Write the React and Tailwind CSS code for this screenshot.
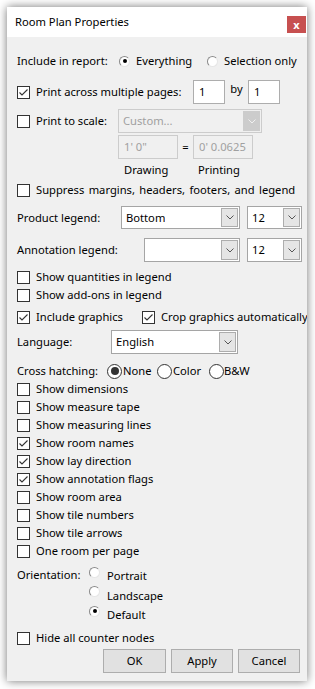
import React from 'react';

const Check = ({ checked }) => (
  <div className="w-[13px] h-[13px] shrink-0 border border-[#333333] bg-white flex items-center justify-center">
    {checked && (
      <svg width="11" height="11" viewBox="0 0 11 11">
        <path d="M1.5 5.5 L4 8 L9.5 2.5" fill="none" stroke="#333333" strokeWidth="1.1" />
      </svg>
    )}
  </div>
);

const CheckRow = ({ checked, label, className = '' }) => (
  <div className={`h-[18px] flex items-center gap-[6px] ${className}`}>
    <Check checked={checked} />
    <span className="whitespace-nowrap">{label}</span>
  </div>
);

// old style 3D radio
const ClassicRadio = ({ checked }) => (
  <div className="w-[11px] h-[11px] shrink-0 rounded-full bg-white border border-t-[#8a8a8a] border-l-[#8a8a8a] border-r-[#e6e6e6] border-b-[#e6e6e6] flex items-center justify-center">
    {checked && <div className="w-[4px] h-[4px] rounded-full bg-black" />}
  </div>
);

const ModernRadio = ({ checked }) => (
  <div className="w-[15px] h-[15px] shrink-0 rounded-full bg-white border border-[#333333] flex items-center justify-center">
    {checked && <div className="w-[8px] h-[8px] rounded-full bg-[#333333]" />}
  </div>
);

const Chevron = ({ color = '#555555' }) => (
  <svg width="8" height="5" viewBox="0 0 8 5">
    <path d="M0.5 0.5 L4 4 L7.5 0.5" fill="none" stroke={color} strokeWidth="1" />
  </svg>
);

const Select = ({ value, width, disabled }) => (
  <div
    className={`${width} h-full shrink-0 flex items-center justify-between border p-px ${
      disabled ? 'border-[#cccccc] bg-[#f0f0f0] text-[#a0a0a0]' : 'border-[#a5a5a5] bg-white'
    }`}
  >
    <span className="pl-[3px] whitespace-nowrap overflow-hidden">{value}</span>
    <div
      className={`w-[17px] h-full shrink-0 flex items-center justify-center border ${
        disabled ? 'bg-[#cccccc] border-[#cccccc]' : 'bg-[#e5e5e5] border-[#adadad]'
      }`}
    >
      <Chevron color={disabled ? '#f0f0f0' : '#555555'} />
    </div>
  </div>
);

const Input = ({ value, width, disabled }) => (
  <div
    className={`${width} h-full shrink-0 flex items-center border pl-[5px] overflow-hidden whitespace-nowrap ${
      disabled ? 'border-[#cccccc] bg-[#f0f0f0] text-[#a0a0a0]' : 'border-[#adadad] bg-white'
    }`}
  >
    {value}
  </div>
);

const Button = ({ label, width }) => (
  <div className={`${width} h-full flex items-center justify-center bg-[#e1e1e1] border border-[#adadad]`}>
    {label}
  </div>
);

const listItems = [
  ['Show dimensions', false],
  ['Show measure tape', false],
  ['Show measuring lines', false],
  ['Show room names', true],
  ['Show lay direction', true],
  ['Show annotation flags', true],
  ['Show room area', false],
  ['Show tile numbers', false],
  ['Show tile arrows', false],
  ['One room per page', false],
];

export default function App() {
  return (
    <div className="min-h-screen bg-white pt-[7px] pl-[7px] font-['Noto_Sans',sans-serif] text-[11.2px] leading-[16px] text-black">
      <div className="w-[300px] h-[674px] bg-[#f0f0f0] shadow-[0_0_9px_rgba(0,0,0,0.55)] flex flex-col overflow-hidden">
        {/* title bar */}
        <div className="h-[30px] shrink-0 bg-white flex items-start justify-between">
          <span className="pl-[8px] pt-[7px]">Room Plan Properties</span>
          <div className="mt-[9px] mr-px w-[19px] h-[17px] bg-[#c75050] text-white flex items-center justify-center text-[11px] font-bold leading-none">
            x
          </div>
        </div>

        <div className="pl-[10px] flex flex-col">
          <div className="mt-[14px] h-[20px] flex items-center">
            <span className="w-[102px] shrink-0">Include in report:</span>
            <div className="w-[88px] flex items-center gap-[6px]">
              <ClassicRadio checked />
              <span>Everything</span>
            </div>
            <div className="flex items-center gap-[6px] whitespace-nowrap">
              <ClassicRadio />
              <span>Selection only</span>
            </div>
          </div>

          <div className="mt-[9px] h-[24px] flex items-center">
            <div className="w-[176px] shrink-0 flex items-center gap-[6px]">
              <Check checked />
              <span className="whitespace-nowrap">Print across multiple pages:</span>
            </div>
            <Input value="1" width="w-[32px]" />
            <span className="w-[23px] text-center self-start pt-px">by</span>
            <Input value="1" width="w-[32px]" />
          </div>

          <div className="mt-[5px] h-[24px] flex items-center">
            <div className="w-[101px] shrink-0 flex items-center gap-[6px]">
              <Check />
              <span className="whitespace-nowrap">Print to scale:</span>
            </div>
            <Select value="Custom..." width="w-[144px]" disabled />
          </div>

          <div className="mt-[2px] h-[24px] flex items-center pl-[101px]">
            <Input value={'1\' 0"'} width="w-[60px]" disabled />
            <span className="w-[15px] text-center">=</span>
            <Input value="0' 0.0625" width="w-[60px]" disabled />
          </div>

          <div className="mt-[2px] h-[18px] flex items-center pl-[107px]">
            <span className="w-[74px]">Drawing</span>
            <span>Printing</span>
          </div>

          <CheckRow className="mt-[2px] [word-spacing:1.5px]" label="Suppress margins, headers, footers, and legend" />

          <div className="mt-[7px] h-[23px] flex items-center">
            <span className="w-[104px] shrink-0">Product legend:</span>
            <Select value="Bottom" width="w-[119px]" />
            <div className="w-[7px]" />
            <Select value="12" width="w-[55px]" />
          </div>

          <div className="mt-[9px] h-[24px] flex items-center">
            <span className="w-[127px] shrink-0">Annotation legend:</span>
            <Select value="" width="w-[96px]" />
            <div className="w-[7px]" />
            <Select value="12" width="w-[55px]" />
          </div>

          <CheckRow className="mt-[6px]" label="Show quantities in legend" />
          <CheckRow label="Show add-ons in legend" />

          <div className="mt-[4px] h-[18px] flex items-center">
            <div className="w-[125px] shrink-0 flex items-center gap-[6px]">
              <Check checked />
              <span className="whitespace-nowrap">Include graphics</span>
            </div>
            <div className="flex items-center gap-[6px] whitespace-nowrap">
              <Check checked />
              <span>Crop graphics automatically</span>
            </div>
          </div>

          <div className="mt-[4px] h-[24px] flex items-center">
            <span className="w-[94px] shrink-0">Language:</span>
            <Select value="English" width="w-[127px]" />
          </div>

          <div className="mt-[8px] h-[18px] flex items-center">
            <span className="w-[90px] shrink-0 whitespace-nowrap">Cross hatching:</span>
            <div className="w-[50px] flex items-center gap-px">
              <ModernRadio checked />
              <span>None</span>
            </div>
            <div className="w-[52px] flex items-center gap-px">
              <ModernRadio />
              <span>Color</span>
            </div>
            <div className="flex items-center">
              <ModernRadio />
              <span>B&amp;W</span>
            </div>
          </div>

          <div className="flex flex-col">
            {listItems.map(([label, checked]) => (
              <CheckRow key={label} label={label} checked={checked} />
            ))}
          </div>

          <div className="mt-[5px] h-[19px] flex items-center">
            <span className="w-[72px] shrink-0">Orientation:</span>
            <div className="self-start pt-[2px]">
              <ClassicRadio />
            </div>
            <span className="ml-[7px] self-end">Portrait</span>
          </div>
          <div className="h-[19.5px] flex items-center pl-[72px]">
            <div className="self-start pt-[2px]">
              <ClassicRadio />
            </div>
            <span className="ml-[7px] self-end">Landscape</span>
          </div>
          <div className="h-[19.5px] flex items-center pl-[72px]">
            <div className="self-start pt-[2px]">
              <ClassicRadio checked />
            </div>
            <span className="ml-[7px] self-end">Default</span>
          </div>

          <CheckRow className="mt-[6px]" label="Hide all counter nodes" />

          <div className="mt-[2px] h-[24px] flex items-center pl-[86px] gap-[5px]">
            <Button label="OK" width="w-[63px]" />
            <Button label="Apply" width="w-[62px]" />
            <Button label="Cancel" width="w-[62px]" />
          </div>
        </div>
      </div>
    </div>
  );
}
